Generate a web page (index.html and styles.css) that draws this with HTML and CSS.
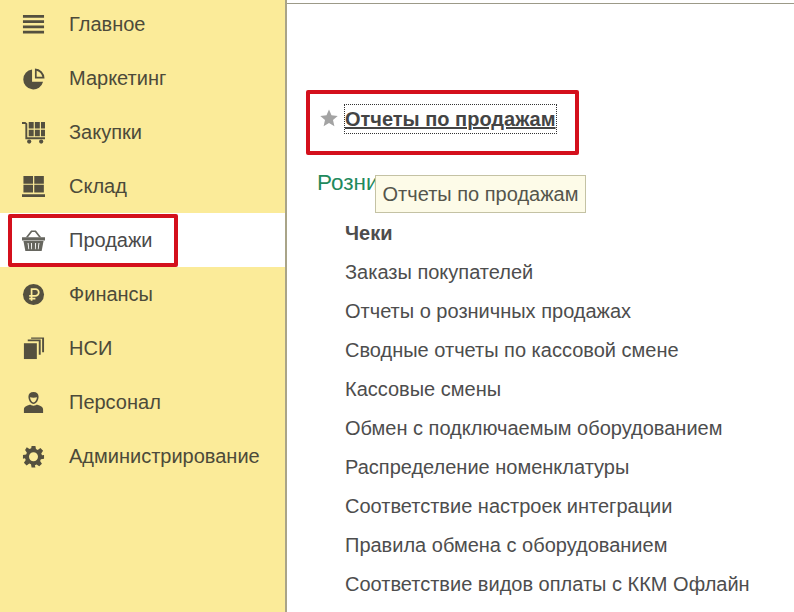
FILE: index.html
```html
<!DOCTYPE html>
<html lang="ru">
<head>
<meta charset="utf-8">
<title>Продажи</title>
<link rel="stylesheet" href="styles.css">
</head>
<body>
<div class="app">
  <nav class="sidebar">
    <a class="nav-item">
      <svg class="nav-icon" viewBox="0 0 24 24"><path d="M1 2h22v3H1zM1 7.500h22v3H1zM1 13h22v3H1zM1 18.500h22v3H1z"/></svg>
      <span>Главное</span>
    </a>
    <a class="nav-item">
      <svg class="nav-icon" viewBox="0 0 24 24"><path d="M10.500 2.500A10.500 10.500 0 1 0 22 15.500H10.500z"/><path d="M13.500 1.500v10.500H23.500A10.500 10.500 0 0 0 13.500 1.500zM15.300 3.800a8.600 8.600 0 0 1 5.900 6.400h-5.900z" fill-rule="evenodd"/></svg>
      <span>Маркетинг</span>
    </a>
    <a class="nav-item">
      <svg class="nav-icon" viewBox="0 0 24 24"><path d="M0 1h3.500l2 1.500V17h18.500v2H3.500V3H0z"/><path d="M7 1h5.200v6.800H7zM13.400 1h5.200v6.800h-5.200zM19.800 1H24v6.800h-4.200zM7 9h5.200v6.800H7zM13.400 9h5.200v6.800h-5.200zM19.800 9H24v6.800h-4.200z"/><circle cx="7.500" cy="21.500" r="2.200"/><circle cx="20" cy="21.500" r="2.200"/></svg>
      <span>Закупки</span>
    </a>
    <a class="nav-item">
      <svg class="nav-icon" viewBox="0 0 24 24"><path d="M1.500 1h10v8h-10zM12.800 1h10v8h-10zM1.500 10.300h10v8h-10zM12.800 10.300h10v8h-10zM0 20h24v3H0z"/></svg>
      <span>Склад</span>
    </a>
    <a class="nav-item active">
      <svg class="nav-icon" viewBox="0 0 24 24"><path d="M0 8.500h24v3.500H0zM1.500 12.500h21L20.500 23h-17zM5.800 14.500l.9 6.500h.8l-.7-6.500zM9.300 14.500l.4 6.500h.8l-.2-6.500zM13.700 14.500l-.2 6.500h.8l.4-6.500zM17.200 14.500l-.7 6.500h.8l.9-6.500z" fill-rule="evenodd"/><path d="M4 8.500l5.500-7h5l5.500 7h-2.200L13.500 3h-3L6.200 8.500z"/></svg>
      <span>Продажи</span>
    </a>
    <a class="nav-item">
      <svg class="nav-icon" viewBox="0 0 24 24"><circle cx="12" cy="12" r="11"/><path class="cut" d="M10 18.500V6.500h4a3.500 3.500 0 0 1 0 7H7.500M7.500 16.200H14"/></svg>
      <span>Финансы</span>
    </a>
    <a class="nav-item">
      <svg class="nav-icon" viewBox="0 0 24 24"><path d="M2 6.500h13.500v16.500H2z"/><path d="M6 4.500V2.700h13.500v15.800H17.500V4.500z"/><path d="M9.500 1.800V.6H23v15.400H21V1.800z"/></svg>
      <span>НСИ</span>
    </a>
    <a class="nav-item">
      <svg class="nav-icon" viewBox="0 0 24 24"><path fill-rule="evenodd" d="M12 1c3.300 0 5.300 2 5.300 5 0 3.600-2.300 7.500-5.300 7.500S6.700 9.600 6.700 6C6.700 3 8.700 1 12 1zM8.400 6.500c.3 2.800 2 5.400 3.600 5.400s3.300-2.600 3.600-5.400c-2 .6-5.200.6-7.200 0z"/><path d="M2 23v-3.800c0-3 3.800-3.700 6.500-5 1 1.500 6 1.500 7 0 2.700 1.300 6.500 2 6.500 5V23z"/></svg>
      <span>Персонал</span>
    </a>
    <a class="nav-item">
      <svg class="nav-icon" viewBox="0 0 24 24"><path fill-rule="evenodd" d="M10 1h4l.6 3.300 1.800.8 2.800-1.900 2.800 2.800-1.900 2.800.8 1.800L23 10.400v3.900l-3.300.6-.8 1.800 1.900 2.800-2.800 2.800-2.800-1.900-1.800.8L14 23.500h-4l-.6-3.300-1.800-.8-2.800 1.900-2.800-2.800 1.900-2.800-.8-1.800L1 14.300v-3.900l3.300-.6.8-1.800-1.900-2.800L5 2.400l2.800 1.900 1.800-.8zM12 7.500a4.700 4.700 0 1 0 0 9.400 4.700 4.700 0 0 0 0-9.400z"/></svg>
      <span>Администрирование</span>
    </a>
  </nav>
  <main class="content">
    <div class="report-link">
      <svg class="star" viewBox="0 0 18 18"><path d="M9 .5l2.500 5.800 6.200.6-4.700 4.100 1.400 6.200L9 13.900l-5.400 3.300L5 11 .3 6.900l6.200-.6z"/></svg>
      <a class="report-title">Отчеты по продажам</a>
    </div>
    <h2 class="section-title">Розница</h2>
    <ul class="links">
      <li class="strong">Чеки</li>
      <li>Заказы покупателей</li>
      <li>Отчеты о розничных продажах</li>
      <li>Сводные отчеты по кассовой смене</li>
      <li>Кассовые смены</li>
      <li>Обмен с подключаемым оборудованием</li>
      <li>Распределение номенклатуры</li>
      <li>Соответствие настроек интеграции</li>
      <li>Правила обмена с оборудованием</li>
      <li>Соответствие видов оплаты с ККМ Офлайн</li>
    </ul>
  </main>
  <div class="tooltip">Отчеты по продажам</div>
  <div class="mark mark-sales"></div>
  <div class="mark mark-report"></div>
</div>
</body>
</html>
```
FILE: styles.css
```css
* { box-sizing: border-box; }
html, body { margin: 0; height: 100%; overflow: hidden; background: #fff; }
body { font-family: "Liberation Sans", Arial, sans-serif; color: #4a4a48; }
.app { position: relative; display: flex; width: 794px; height: 612px; overflow: hidden; }
.sidebar {
  flex: 0 0 287px;
  height: 615px;
  margin-top: -3px;
  background: #fbeb99;
  border-right: 2px solid #a9a488;
}
.nav-item {
  display: flex;
  align-items: center;
  gap: 24px;
  height: 54px;
  padding-left: 22px;
  font-size: 20px;
  color: #4c4a3a;
}
.nav-item.active { background: #fff; color: #4a4a4a; }
.nav-icon { flex: 0 0 23px; width: 23px; height: 23px; fill: #54503f; }
.nav-item.active .nav-icon { fill: #66665f; }
.cut { fill: none; stroke: #fbeb99; stroke-width: 1.800; }
.content { flex: 1; padding: 0 0 0 30px; border-top: 1px solid #9c9a88; margin-top: 3px; }
.report-link { display: flex; align-items: center; height: 30px; margin-top: 100px; margin-left: 3px; gap: 7px; }
.star { width: 18px; height: 18px; fill: #a3a3a3; margin-top: -3px; }
.report-title {
  font-size: 20px;
  font-weight: 700;
  color: #444;
  text-decoration: underline;
  outline: 1px dotted #333;
  line-height: 28px;
}
.section-title { margin: 35px 0 0; font-size: 22.500px; font-weight: 400; color: #1f8a5d; line-height: 28px; }
.links { list-style: none; margin: 17px 0 0 28px; padding: 0; }
.links li { height: 39px; line-height: 39px; font-size: 20px; color: #4d4d4d; white-space: nowrap; }
.links li.strong { font-weight: 700; }
.tooltip {
  position: absolute;
  left: 375px;
  top: 175px;
  width: 211px;
  height: 38px;
  line-height: 37px;
  text-align: center;
  font-size: 20px;
  color: #55554c;
  background: #fdfbe8;
  border: 1px solid #c4c2a4;
}
.mark { position: absolute; border: 4px solid #d4101c; border-radius: 2px; }
.mark-sales { left: 8px; top: 214px; width: 170px; height: 53px; }
.mark-report { left: 306px; top: 90px; width: 273px; height: 65px; }
```
